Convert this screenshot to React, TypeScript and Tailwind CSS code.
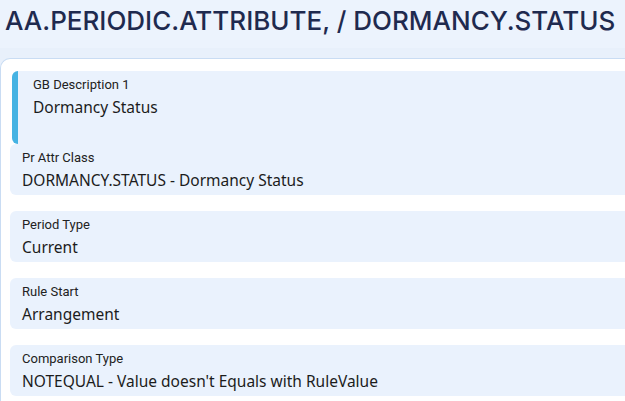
const FIELDS = [
  { label: "Pr Attr Class", value: "DORMANCY.STATUS - Dormancy Status" },
  { label: "Period Type", value: "Current" },
  { label: "Rule Start", value: "Arrangement" },
  { label: "Comparison Type", value: "NOTEQUAL - Value doesn't Equals with RuleValue" },
]

export default function App() {
  return (
    <div className="w-[625px] h-[401px] overflow-hidden bg-[#e8f0fb] font-['Noto_Sans',sans-serif]">
      {/* Title bar */}
      <div className="h-[48px] bg-[#ecf3fd] pl-[5px] pt-[4px]">
        <h1 className="font-['Inter',sans-serif] font-medium text-[26px] leading-[34px] text-[#1f2a4f] whitespace-nowrap">
          AA.PERIODIC.ATTRIBUTE, / DORMANCY.STATUS
        </h1>
      </div>

      {/* Card */}
      <div className="mt-[10px] h-[400px] rounded-tl-[10px] border-t border-l border-[#c9dcf3] bg-white pt-[12px]">
        {/* Highlighted field */}
        <div className="ml-[11px] flex rounded-l-[6px] bg-[#eaf2fd]">
          <div className="w-[6px] shrink-0 rounded-l-[6px] bg-[#45b3e3]" />
          <div className="h-[73px] pl-[15px] pt-[4px]">
            <div className="font-['Roboto',sans-serif] text-[13px] leading-[20px] text-[#222]">GB Description 1</div>
            <div className="text-[15.5px] leading-[24px] text-[#1c1c1c]">Dormancy Status</div>
          </div>
        </div>

        <div className="flex flex-col gap-[16px]">
          {FIELDS.map((f) => (
            <div key={f.label} className="ml-[9px] h-[51px] rounded-l-[6px] bg-[#eaf2fd] pl-[12px] pt-[4px]">
              <div className="font-['Roboto',sans-serif] text-[13px] leading-[20px] text-[#222]">{f.label}</div>
              <div className="text-[15.5px] leading-[24px] text-[#1c1c1c]">{f.value}</div>
            </div>
          ))}
        </div>
      </div>
    </div>
  )
}
